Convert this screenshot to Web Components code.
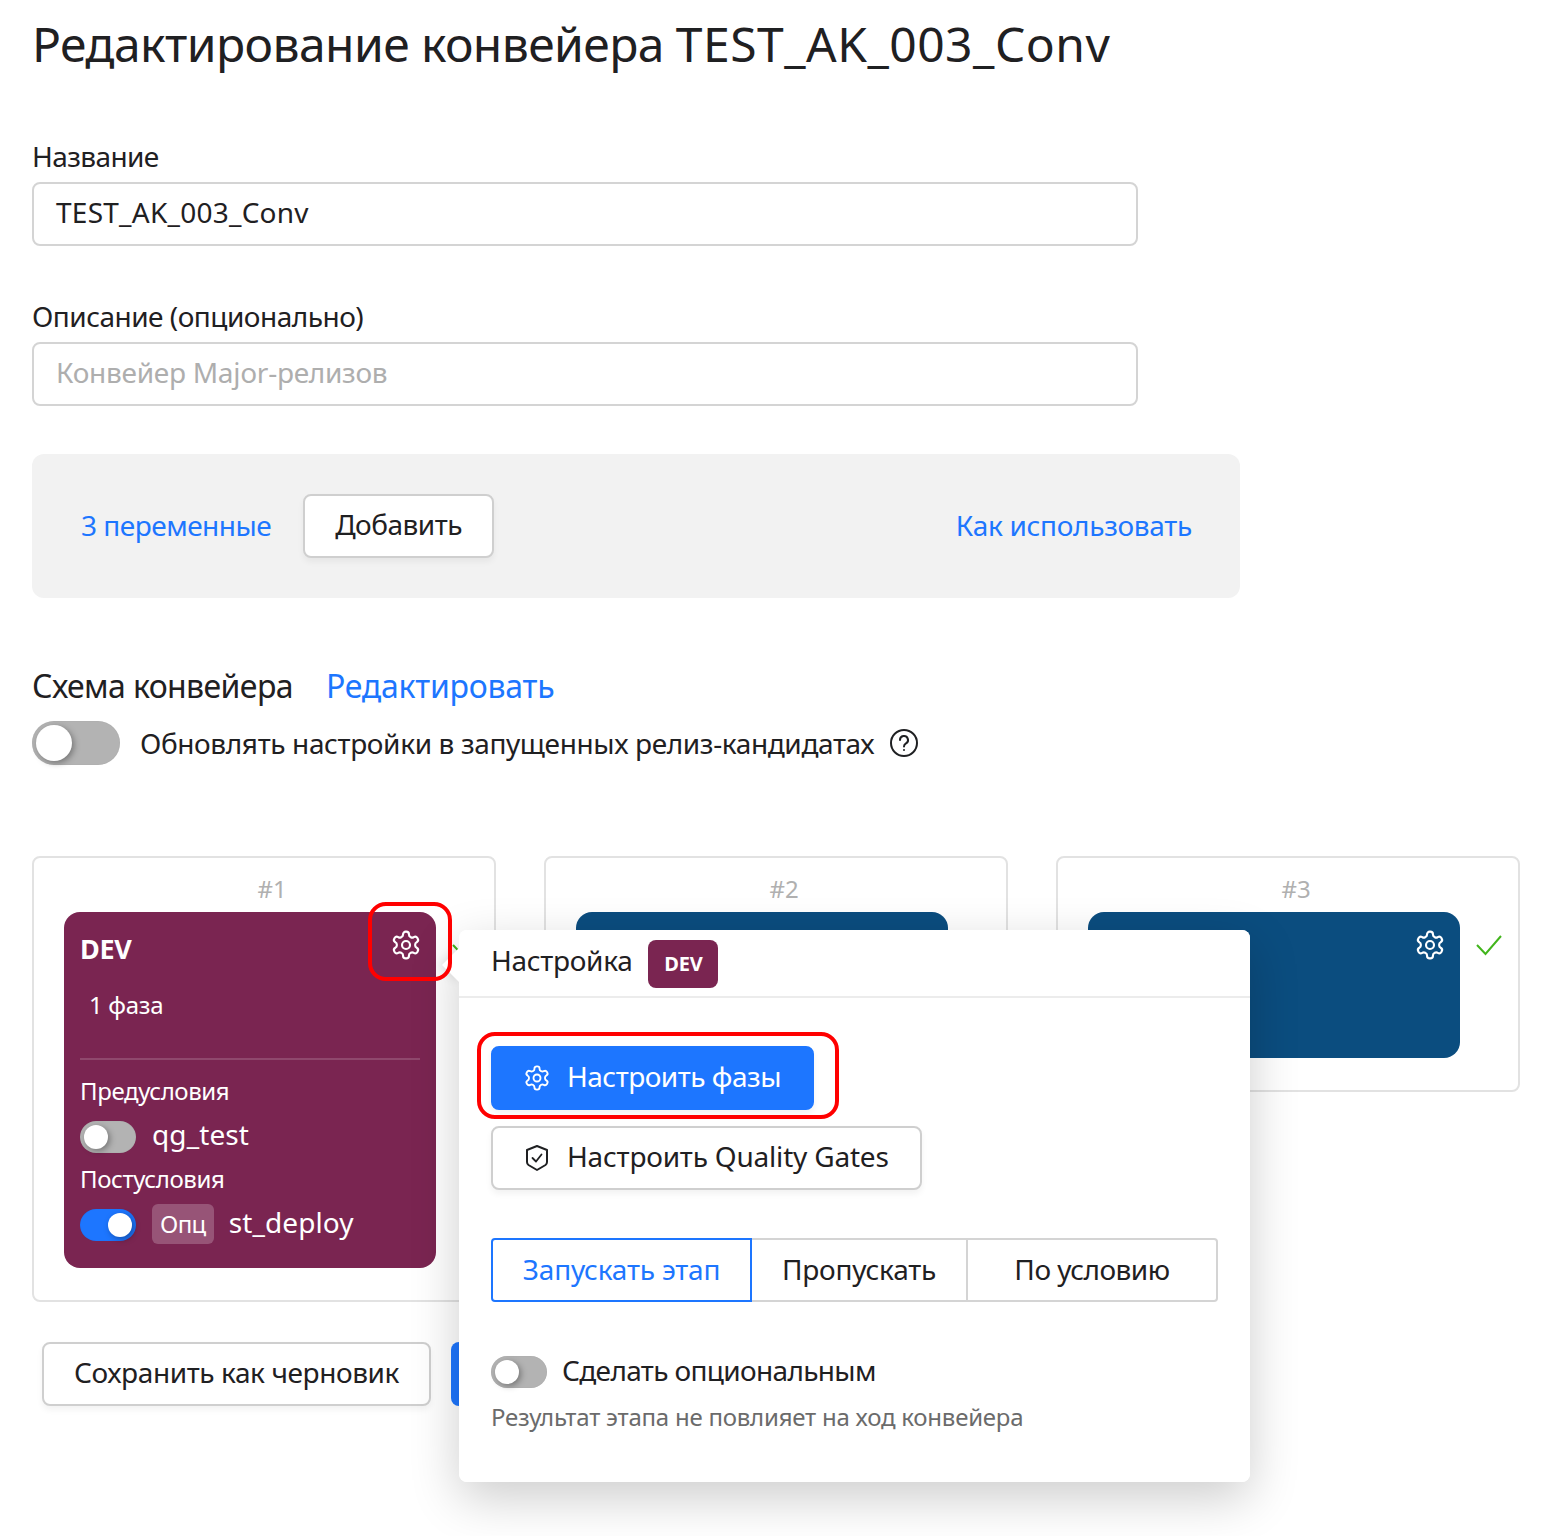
<!DOCTYPE html>
<html lang="ru"><head><meta charset="utf-8"><title>Редактирование конвейера</title>
<style>
html,body{margin:0;padding:0;background:#fff}
body{font-family:"Noto Sans",sans-serif;color:#1f2022;font-size:28px}
</style></head><body>
<pipeline-page></pipeline-page>
<script>
const GEAR='<svg viewBox="0 0 24 24" fill="none" stroke="currentColor" stroke-width="1.6" stroke-linejoin="round"><path d="M12.22 2h-.44a2 2 0 0 0-2 2v.18a2 2 0 0 1-1 1.73l-.43.25a2 2 0 0 1-2 0l-.15-.08a2 2 0 0 0-2.73.73l-.22.38a2 2 0 0 0 .73 2.73l.15.1a2 2 0 0 1 1 1.72v.51a2 2 0 0 1-1 1.74l-.15.09a2 2 0 0 0-.73 2.73l.22.38a2 2 0 0 0 2.73.73l.15-.08a2 2 0 0 1 2 0l.43.25a2 2 0 0 1 1 1.73V20a2 2 0 0 0 2 2h.44a2 2 0 0 0 2-2v-.18a2 2 0 0 1 1-1.73l.43-.25a2 2 0 0 1 2 0l.15.08a2 2 0 0 0 2.73-.73l.22-.39a2 2 0 0 0-.73-2.73l-.15-.08a2 2 0 0 1-1-1.74v-.5a2 2 0 0 1 1-1.74l.15-.09a2 2 0 0 0 .73-2.73l-.22-.38a2 2 0 0 0-2.73-.73l-.15.08a2 2 0 0 1-2 0l-.43-.25a2 2 0 0 1-1-1.73V4a2 2 0 0 0-2-2z"/><circle cx="12" cy="12" r="3"/></svg>';
const SHIELD='<svg viewBox="0 0 24 28" fill="none" stroke="currentColor" stroke-width="2" stroke-linejoin="round" stroke-linecap="round"><path d="M12 2 L22 6 V18 Q22 20 20.5 21 L12 26 L3.5 21 Q2 20 2 18 V6 Z"/><path d="M7.5 14 L11 17.5 L16.5 10.5" stroke-width="1.8"/></svg>';
const CHECK='<svg viewBox="0 0 26 22" fill="none" stroke="currentColor" stroke-width="2"><path d="M1 11 L9.5 20 L25 2"/></svg>';
function def(name,css,html){
  customElements.define(name,class extends HTMLElement{
    constructor(){super();const r=this.attachShadow({mode:'open'});
      r.innerHTML='<style>'+css+'</style>'+(typeof html==='function'?html(this):html);}
  });
}
def('ui-toggle',`
:host{display:inline-flex;flex:none;box-sizing:border-box;width:56px;height:32px;border-radius:16px;background:#b3b3b3;padding:4px;justify-content:flex-start;box-shadow:inset 0 0 1px rgba(0,0,0,.15)}
:host([on]){background:#1d76ff;justify-content:flex-end}
:host([large]){width:88px;height:44px;border-radius:22px}
i{display:block;width:24px;height:24px;border-radius:50%;background:#fff;box-shadow:2px 2px 6px rgba(0,0,0,.35)}
:host([large]) i{width:36px;height:36px}
`,'<i></i>');
def('ui-button',`
:host{display:inline-flex;align-items:center;gap:16px;box-sizing:border-box;height:64px;padding:0 30px 4px;border:2px solid #cfcfcf;border-radius:8px;background:#fff;color:#1f2022;font-size:28px;white-space:nowrap;box-shadow:0 4px 6px rgba(0,0,0,.05);flex:none}
:host([primary]){background:#1d76ff;border-color:#1d76ff;color:#fff}
:host([icon]){padding-right:31px}
::slotted(svg){width:28px;height:28px;display:block;flex:none;margin-top:4px}
`,'<slot></slot>');
def('form-field',`
:host{display:block}
label{display:block;font-size:28px;line-height:38px;margin-bottom:7px;color:#1f2022;letter-spacing:var(--ll,-.6px)}
div{box-sizing:border-box;height:64px;border:2px solid #d4d4d4;border-radius:8px;padding:0 22px 4px;display:flex;align-items:center;font-size:28px;color:#1f2022;width:1106px;letter-spacing:var(--vl,.25px)}
:host([placeholder]) div{color:#aeaeae}
`,f=>`<label>${f.getAttribute('label')}</label><div><slot></slot></div>`);
def('vars-panel',`
:host{display:flex;align-items:center;box-sizing:border-box;width:1208px;height:144px;padding:0 48px 0 49px;background:#f2f2f2;border-radius:12px;font-size:28px}
a{color:#1d76ff;margin-bottom:2px}
.l{margin-right:32px;letter-spacing:-.5px}
.r{margin-left:auto;letter-spacing:-.3px}
ui-button{letter-spacing:-.5px}
`,'<a class="l">3 переменные</a><ui-button>Добавить</ui-button><a class="r">Как использовать</a>');
def('stage-card',`
:host{display:block;box-sizing:border-box;width:464px;border:2px solid #e2e2e2;border-radius:8px;background:#fff;padding:14px 0 32px 30px;flex:none}
.n{text-align:center;color:#b0b0b0;font-size:24px;line-height:34px;margin-bottom:6px;padding-right:14px}
.row{display:flex;align-items:flex-start}
.box{flex:none;width:372px;min-height:146px;box-sizing:border-box;border-radius:16px;background:var(--c,#0b4d7f);color:#fff;padding:16px;position:relative}
.gear{position:absolute;right:14px;top:17px;width:32px;height:32px;display:block}
.gear svg{display:block;width:100%;height:100%}
.check{flex:none;width:26px;height:22px;margin:22px 0 0 16px;color:#42b51c}
.check svg{display:block}
`,f=>`<div class="n">${f.getAttribute('num')}</div><div class="row"><div class="box"><span class="gear">${GEAR}</span><slot></slot></div><span class="check">${CHECK}</span></div>`);
def('stage-details',`
:host{display:block;color:#fff;font-size:24px;padding-bottom:4px}
h3{margin:0;font-size:27px;line-height:42px;font-weight:700;letter-spacing:-.3px}
.ph{margin:16px 0 0 9px;line-height:38px;height:38px;letter-spacing:-.3px}
hr{border:0;height:2px;background:rgba(255,255,255,.16);margin:34px 0 12px}
.t{height:40px;line-height:38px;letter-spacing:-.4px}
.c{display:flex;align-items:center;gap:16px;font-size:28px;height:48px;letter-spacing:.1px}
.c ui-toggle{margin-top:2px}
.c .x{margin-bottom:4px;margin-left:-1px}
.c .y{margin-bottom:4px}
.o{background:rgba(255,255,255,.22);border-radius:6px;font-size:24px;padding:0 8px;height:40px;line-height:40px;letter-spacing:-.6px}
`,`<h3>DEV</h3><div class="ph">1 фаза</div><hr>
<div class="t">Предусловия</div><div class="c"><ui-toggle></ui-toggle><span class="y">qg_test</span></div>
<div class="t">Постусловия</div><div class="c"><ui-toggle on></ui-toggle><span class="o">Опц</span><span class="x">st_deploy</span></div>`);
def('seg-control',`
:host{display:flex;box-sizing:border-box;width:727px;height:64px;font-size:28px}
span{display:flex;align-items:center;justify-content:center;box-sizing:border-box;border:2px solid #d4d4d4;border-left-width:0;padding-bottom:2px;letter-spacing:-.2px}
.a{width:261px;border:2px solid #1d76ff;color:#1d76ff;border-radius:4px 0 0 4px}
.b{width:216px}.c{width:250px;border-radius:0 4px 4px 0;letter-spacing:-.5px}
`,'<span class="a">Запускать этап</span><span class="b">Пропускать</span><span class="c">По условию</span>');
def('settings-popup',`
:host{display:block;position:absolute;left:459px;top:930px;width:791px;height:552px;box-sizing:border-box;background:#fff;border-radius:8px;box-shadow:0 16px 50px rgba(0,0,0,.2)}
.arrow{position:absolute;left:-12px;top:23px;width:24px;height:24px;background:#fff;transform:rotate(45deg);box-shadow:-3px 3px 8px rgba(0,0,0,.08)}
.in{position:relative;height:100%;background:#fff;border-radius:8px}
header{display:flex;align-items:center;gap:16px;height:68px;box-sizing:border-box;border-bottom:2px solid #ececec;padding:2px 32px 0}
header>span:first-child{margin:0 0 8px 0;letter-spacing:-.3px}
.badge{display:flex;align-items:center;justify-content:center;width:70px;height:48px;border-radius:8px;background:#7a2551;color:#fff;font-weight:700;font-size:20px;letter-spacing:-.2px;padding-bottom:2px;box-sizing:border-box}
.body{padding:48px 32px 0}
.s{margin-top:16px;letter-spacing:-.2px}
.p{letter-spacing:-.5px}
seg-control{margin-top:48px}
.opt{display:flex;align-items:center;gap:16px;margin-top:54px;height:32px}
.opt span{margin:0 0 4px -1px;letter-spacing:-.65px}
.hint{color:#6b6b6b;font-size:24px;margin-top:12px;line-height:34px;letter-spacing:-.23px}
`,`<div class="arrow"></div><div class="in"><header><span>Настройка</span><span class="badge">DEV</span></header>
<div class="body"><ui-button primary icon class="p">${GEAR}Настроить фазы</ui-button><br><ui-button icon class="s">${SHIELD}Настроить Quality Gates</ui-button>
<seg-control></seg-control>
<div class="opt"><ui-toggle></ui-toggle><span>Сделать опциональным</span></div>
<div class="hint">Результат этапа не повлияет на ход конвейера</div></div></div>`);
def('red-mark',`
:host{display:block;position:absolute;box-sizing:border-box;border:4px solid #f00;border-radius:18px;pointer-events:none}
`,'');
def('pipeline-page',`
:host{display:block;position:relative;height:1536px;overflow:hidden;box-sizing:border-box;padding:0 32px;width:1568px}
h1{margin:0;font-size:48px;font-weight:400;line-height:66px;padding:11px 0 0;height:120px;box-sizing:border-box;letter-spacing:-.58px}
h1 span{letter-spacing:.5px}
.f{display:flex;flex-direction:column;gap:51px;padding-top:17px;margin-bottom:48px}
.sec{display:flex;gap:33px;align-items:center;height:44px;margin-top:66px;font-size:32px;padding-bottom:2px;box-sizing:border-box;letter-spacing:-.6px}
.sec a{color:#1d76ff;letter-spacing:-.25px}
.tog{display:flex;align-items:center;gap:20px;margin-top:13px;font-size:28px;height:44px;letter-spacing:-.37px}
.q{width:28px;height:28px;display:block;margin-left:-4px}
.cards{display:flex;gap:48px;align-items:flex-start;margin-top:91px}
.acts{display:flex;gap:20px;margin:40px 0 0 10px}
.acts ui-button{letter-spacing:-.4px}
.blue{width:300px;height:64px;border-radius:8px;background:#1d76ff}
`,`<h1>Редактирование конвейера <span>TEST_AK_003_Conv</span></h1>
<div class="f"><form-field label="Название">TEST_AK_003_Conv</form-field>
<form-field label="Описание (опционально)" placeholder style="--ll:-.5px;--vl:-.27px">Конвейер Major-релизов</form-field></div>
<vars-panel></vars-panel>
<div class="sec"><span>Схема конвейера</span><a>Редактировать</a></div>
<div class="tog"><ui-toggle large></ui-toggle><span>Обновлять настройки в запущенных релиз-кандидатах</span>
<svg class="q" viewBox="0 0 28 28" fill="none" stroke="currentColor" stroke-width="2"><circle cx="14" cy="14" r="13"/><path d="M10 11a4 4 0 1 1 6 3.4c-1.3.8-2 1.5-2 3" stroke-linecap="round"/><circle cx="14" cy="21" r="1" fill="currentColor" stroke="none"/></svg></div>
<div class="cards"><stage-card num="#1" style="--c:#7a2551"><stage-details></stage-details></stage-card><stage-card num="#2"></stage-card><stage-card num="#3"></stage-card></div>
<div class="acts"><ui-button>Сохранить как черновик</ui-button><div class="blue"></div></div>
<settings-popup></settings-popup>
<red-mark style="left:368px;top:902px;width:84px;height:79px"></red-mark>
<red-mark style="left:477px;top:1032px;width:362px;height:87px"></red-mark>`);
</script></body></html>
